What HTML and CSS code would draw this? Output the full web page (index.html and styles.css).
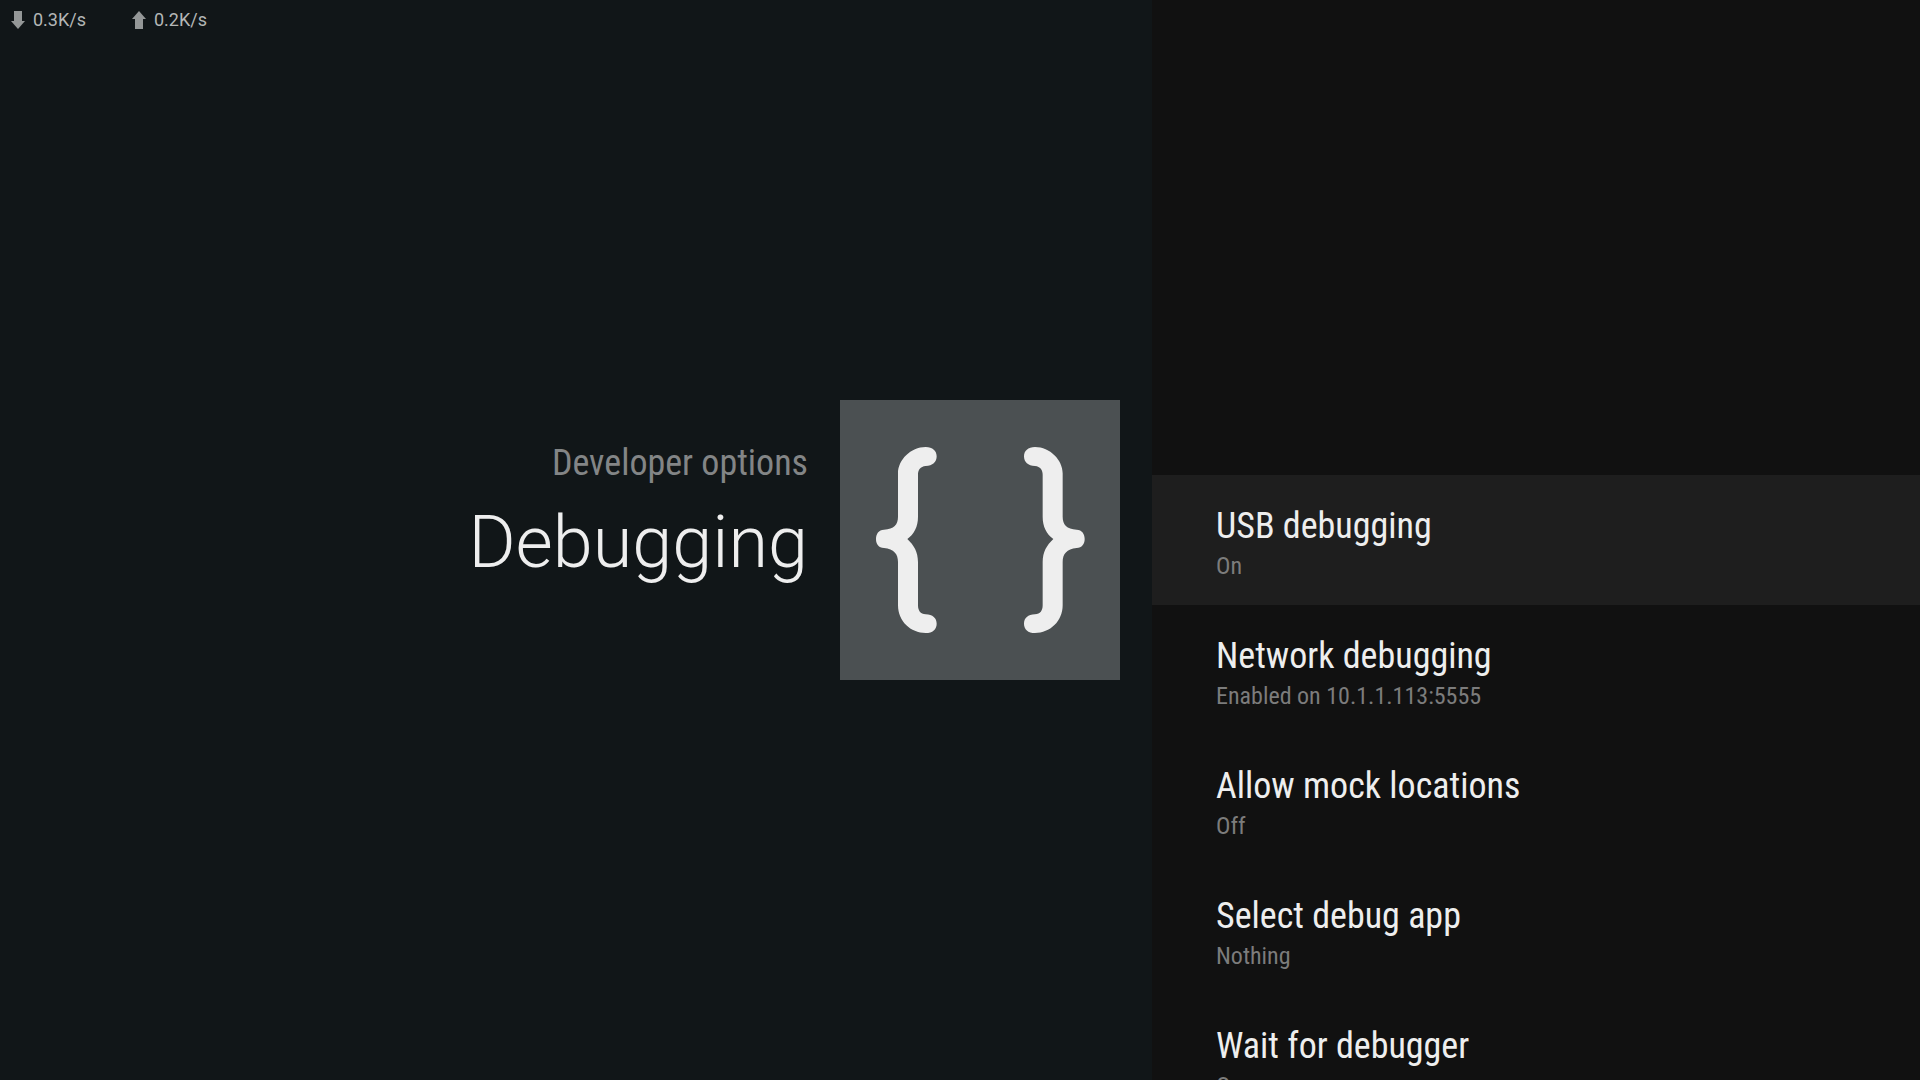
FILE: index.html
```html
<!DOCTYPE html>
<html lang="en">
<head>
  <meta charset="UTF-8">
  <meta name="viewport" content="width=device-width, initial-scale=1.0">
  <title>Debugging</title>
  <link rel="stylesheet" href="styles.css">
</head>
<body>
  <main class="overview">
    <div class="net-speed">
      <span class="speed">
        <svg class="arrow" viewBox="0 0 14 18" aria-hidden="true"><path d="M3 0h8v10h3l-7 8-7-8h3z"/></svg>
        0.3K/s
      </span>
      <span class="speed">
        <svg class="arrow" viewBox="0 0 14 18" aria-hidden="true"><path d="M7 0l7 8h-3v10H3V8H0z"/></svg>
        0.2K/s
      </span>
    </div>
    <div class="heading">
      <div class="heading-text">
        <p class="breadcrumb">Developer options</p>
        <h1 class="title">Debugging</h1>
      </div>
      <svg class="icon" viewBox="0 0 840 840" aria-hidden="true">
        <defs>
          <path id="brace" d="M257 141C278 141 290 153 290 169C290 186 278 198 257 198C241 200 234 210 234 224V350C234 380 222 402 202 417C222 436 234 456 234 486V616C234 632 241 642 257 643C278 643 290 655 290 671C290 688 278 699 257 699C212 699 174 664 174 616V486C174 462 162 447 132 444C116 443 108 433 108 417C108 401 116 390 132 389C162 387 174 374 174 350V220C174 180 212 141 257 141Z"/>
        </defs>
        <use href="#brace"/>
        <use href="#brace" transform="translate(842 0) scale(-1 1)"/>
      </svg>
    </div>
  </main>

  <nav class="panel" aria-label="Debugging">
    <ul class="options">
      <li>
        <button class="option selected" type="button">
          <span class="name">USB debugging</span>
          <span class="value">On</span>
        </button>
      </li>
      <li>
        <button class="option" type="button">
          <span class="name">Network debugging</span>
          <span class="value">Enabled on 10.1.1.113:5555</span>
        </button>
      </li>
      <li>
        <button class="option" type="button">
          <span class="name">Allow mock locations</span>
          <span class="value">Off</span>
        </button>
      </li>
      <li>
        <button class="option" type="button">
          <span class="name">Select debug app</span>
          <span class="value">Nothing</span>
        </button>
      </li>
      <li>
        <button class="option" type="button">
          <span class="name">Wait for debugger</span>
          <span class="value">On</span>
        </button>
      </li>
    </ul>
  </nav>
</body>
</html>
```
FILE: styles.css
```css
* {
  box-sizing: border-box;
}
body {
  display: grid;
  grid-template-columns: 3fr 2fr;
  height: 100vh;
  margin: 0;
  overflow: hidden;
  background: #111618;
  color: #eeeeee;
  font-family: "Roboto Condensed", Roboto, sans-serif;
}

/* left side */
.overview {
  display: grid;
  grid-template-rows: 1fr auto 1fr;
}
.net-speed {
  display: flex;
  align-items: flex-start;
  gap: 46px;
  padding: 8px 11px;
  color: #b4b6b6;
  font-family: Roboto, sans-serif;
  font-size: 18px;
  line-height: 24px;
}
.speed {
  display: flex;
  align-items: center;
  gap: 8px;
}
.arrow {
  width: 14px;
  height: 18px;
  fill: #949797;
}
.heading {
  display: flex;
  align-items: center;
  justify-content: flex-end;
  gap: 32px;
  padding-right: 32px;
}
.heading-text {
  padding-bottom: 50px;
  text-align: right;
}
.breadcrumb {
  margin: 0;
  color: #838586;
  font-size: 36px;
  line-height: 48px;
}
.title {
  margin: 8px 0 0;
  font-family: Roboto, sans-serif;
  font-size: 72px;
  font-weight: 300;
  line-height: 96px;
}
.icon {
  width: 280px;
  height: 280px;
  background: #4b5052;
  fill: #eeeeee;
}

/* right side, the selected row stays in the middle */
.panel {
  overflow: hidden;
  background: #111111;
}
.options {
  margin: 0;
  padding: calc(50vh - 65px) 0 0;
  list-style: none;
}
.option {
  display: flex;
  flex-direction: column;
  justify-content: center;
  width: 100%;
  height: 130px;
  padding: 4px 64px 0;
  border: 0;
  background: none;
  color: inherit;
  font-family: inherit;
  text-align: left;
}
.option.selected {
  background: #1e1e1e;
}
.name {
  font-size: 36px;
  line-height: 48px;
}
.value {
  color: #7c7c7c;
  font-size: 24px;
  line-height: 32px;
}
```
